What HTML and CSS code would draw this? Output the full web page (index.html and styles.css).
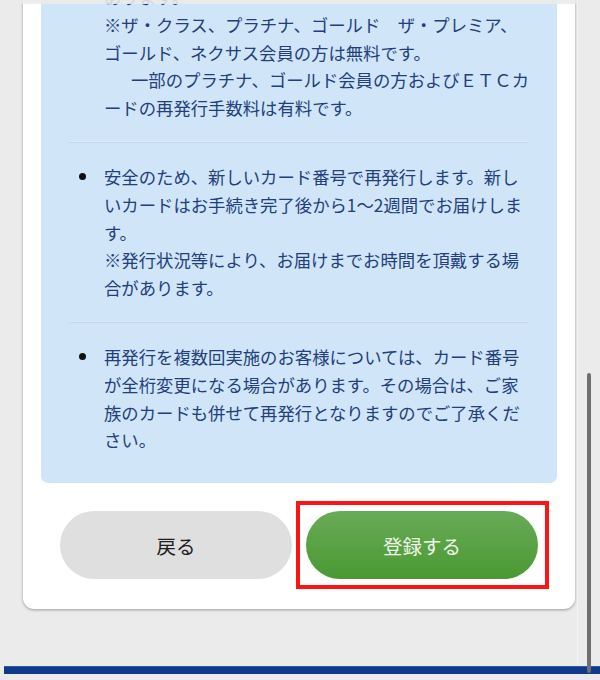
FILE: index.html
```html
<!DOCTYPE html>
<html lang="ja">
<head>
<meta charset="utf-8">
<title>カード再発行</title>
<link rel="stylesheet" href="styles.css">
</head>
<body>
<div class="viewport">
  <main class="page">
    <section class="card">
      <div class="notice">
        <ul class="notes">
          <li class="note note--cont">
            <span class="dot-col"></span>
            <p class="note-text">あります。<br>※ザ・クラス、プラチナ、ゴールド　ザ・プレミア、<br>ゴールド、ネクサス会員の方は無料です。<br><span class="indent">一部のプラチナ、ゴールド会員の方およびＥＴＣカ</span><br>ードの再発行手数料は有料です。</p>
          </li>
          <li class="note">
            <span class="dot-col"><span class="dot"></span></span>
            <p class="note-text">安全のため、新しいカード番号で再発行します。新し<br>いカードはお手続き完了後から1～2週間でお届けしま<br>す。<br>※発行状況等により、お届けまでお時間を頂戴する場<br>合があります。</p>
          </li>
          <li class="note">
            <span class="dot-col"><span class="dot"></span></span>
            <p class="note-text">再発行を複数回実施のお客様については、カード番号<br>が全桁変更になる場合があります。その場合は、ご家<br>族のカードも併せて再発行となりますのでご了承くだ<br>さい。</p>
          </li>
        </ul>
      </div>
      <div class="actions">
        <button class="btn btn--back" type="button">戻る</button>
        <div class="btn-wrap">
          <button class="btn btn--submit" type="button">登録する</button>
          <span class="highlight"></span>
        </div>
      </div>
    </section>
  </main>
  <footer class="bottom-bar"></footer>
</div>
<div class="top-band"></div>
<div class="track-line"></div>
<div class="scrollbar"></div>
</body>
</html>
```
FILE: styles.css
```css
* { box-sizing: border-box; }

html, body {
  margin: 0;
  padding: 0;
  height: 680px;
  overflow: hidden;
  background: #ebebeb;
  font-family: "Noto Sans CJK JP", "Noto Sans", sans-serif;
}

.viewport {
  width: 600px;
  height: 680px;
  overflow: hidden;
}

.page {
  margin-top: -55px;
  padding: 0 25px 0 23px;
}

.card {
  width: 552px;
  background: #ffffff;
  border-radius: 0 0 11px 11px;
  box-shadow: 0 1px 3px rgba(0, 0, 0, 0.35);
  padding: 18px 18px 30px;
}

.notice {
  background: #d0e5f7;
  border-radius: 0 0 7px 7px;
  padding: 0 29px 9px 28px;
}

.notes {
  list-style: none;
  margin: 0;
  padding: 0;
}

.note {
  display: flex;
  padding: 20px 0 19px;
  border-top: 1px solid #c6d7e7;
  border-bottom: 1px solid #d9eaf9;
}

.note--cont {
  border-top: none;
}

.note:last-child {
  border-bottom: none;
  padding-bottom: 20px;
}

.dot-col {
  flex: 0 0 35px;
  height: 27.8px;
  display: flex;
  align-items: center;
  padding-left: 9.5px;
}

.dot {
  width: 7px;
  height: 7px;
  border-radius: 50%;
  background: #111;
}

.note-text {
  margin: 0;
  flex: 1;
  min-width: 0;
  font-size: 17.35px;
  line-height: 27.8px;
  color: #233f7b;
  white-space: nowrap;
  text-spacing-trim: space-all;
}

.indent {
  padding-left: 27px;
}

.actions {
  display: flex;
  gap: 14px;
  margin-top: 28px;
  padding: 0 19px;
}

.btn {
  width: 232px;
  height: 68px;
  border: none;
  border-radius: 34px;
  font-family: "Noto Sans CJK JP", "Noto Sans", sans-serif;
  font-size: 19.5px;
  padding: 0;
  cursor: pointer;
}

.btn--back {
  background: #dfdfdf;
  color: #1e1e1e;
}

.btn-wrap {
  position: relative;
  display: flex;
}

.btn--submit {
  background: linear-gradient(to bottom, #69ab58, #4a9932);
  color: #eef6ea;
}

.highlight {
  position: absolute;
  top: -10px;
  left: -10px;
  right: -11px;
  bottom: -10px;
  border: 4px solid #ff1414;
  pointer-events: none;
}

.bottom-bar {
  margin: 57px 0 0 4px;
  height: 8px;
  background: #10398b;
  box-shadow: inset 0 1px 0 #2f5aa4;
}

.top-band {
  position: fixed;
  top: 0;
  left: 0;
  right: 0;
  height: 4px;
  background: rgba(235, 235, 235, 0.88);
}

.track-line {
  position: fixed;
  top: 0;
  left: 577px;
  width: 1px;
  height: 664px;
  background: #f3f3f3;
}

.scrollbar {
  position: fixed;
  top: 373px;
  left: 587px;
  width: 4px;
  height: 300px;
  border-radius: 2px;
  background: #6f6f6f;
}
```
